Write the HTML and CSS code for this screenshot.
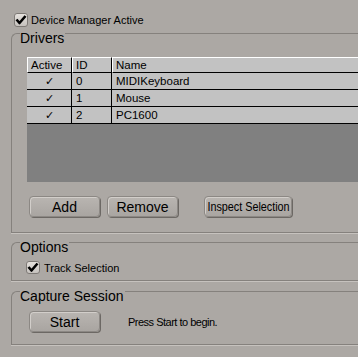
FILE: index.html
```html
<html>
<head>
    <link rel="stylesheet" href="styles.css">
</head>
<body>
<div class="toprow">
    <svg class="check" width="14" height="14" viewBox="0 0 14 14">
        <defs>
            <linearGradient id="cbfill" x1="0" y1="0" x2="0" y2="1">
                <stop offset="0" stop-color="#e6e2de"/>
                <stop offset="1" stop-color="#c4c0bc"/>
            </linearGradient>
        </defs>
        <rect x="0.5" y="0.5" width="13" height="13" rx="2.5" fill="url(#cbfill)" stroke="#7e7a76"/>
        <path d="M2.5 6.5 L5.5 10 L11.5 3" fill="none" stroke="#000" stroke-width="2.6" stroke-linejoin="round"/>
    </svg>
    <span>Device Manager Active</span>
</div>

<div class="group drivers">
    <div class="legend">Drivers</div>
    <div class="list">
        <table class="grid">
            <tr>
                <th class="c-active">Active</th>
                <th class="c-id">ID</th>
                <th class="c-name">Name</th>
            </tr>
            <tr>
                <td class="c-active tick">&#10003;</td>
                <td class="c-id">0</td>
                <td class="c-name">MIDIKeyboard</td>
            </tr>
            <tr>
                <td class="c-active tick">&#10003;</td>
                <td class="c-id">1</td>
                <td class="c-name">Mouse</td>
            </tr>
            <tr>
                <td class="c-active tick">&#10003;</td>
                <td class="c-id">2</td>
                <td class="c-name">PC1600</td>
            </tr>
        </table>
        <div class="empty"></div>
    </div>
    <div class="buttons">
        <button class="btn">Add</button>
        <button class="btn">Remove</button>
        <button class="btn wide"><span class="narrow">Inspect Selection</span></button>
    </div>
</div>

<div class="group options">
    <div class="legend">Options</div>
    <div class="optrow">
        <svg class="check" width="14" height="13" viewBox="0 0 14 13">
            <rect x="0.5" y="0.5" width="13" height="12" rx="2.5" fill="url(#cbfill)" stroke="#7e7a76"/>
            <path d="M2.5 6 L5.5 9.5 L11.5 2.5" fill="none" stroke="#000" stroke-width="2.6" stroke-linejoin="round"/>
        </svg>
        <span>Track Selection</span>
    </div>
</div>

<div class="group capture">
    <div class="legend">Capture Session</div>
    <div class="caprow">
        <button class="btn">Start</button>
        <span class="hint">Press Start to begin.</span>
    </div>
</div>
</body>
</html>
```

FILE: styles.css
```css
body {
    margin: 0;
    background: #aca8a4;
    font-family: "Liberation Sans", Arial, sans-serif;
    color: #000;
    overflow: hidden;
}

.toprow {
    display: flex;
    align-items: center;
    gap: 3px;
    height: 14px;
    padding: 13px 0 0 14px;
    font-size: 11px;
}

.check {
    display: block;
    flex: none;
}

/* etched group frame, open on the right */
.group {
    margin-left: 11px;
    border: 1px solid #85817d;
    border-right: none;
    border-top-left-radius: 6px;
    box-shadow: 0 1px 0 #c6c2be;
}

.drivers {
    margin-top: 6px;
}

.options {
    margin-top: 9px;
}

.capture {
    margin-top: 10px;
}

.legend {
    width: fit-content;
    margin: -3px 0 0 8px;
    padding-right: 1px;
    background: #aca8a4;
    font-size: 14px;
    line-height: 14px;
}

.list {
    margin: 12px 0 0 15px;
}

.grid {
    width: 100%;
    border-collapse: separate;
    border-spacing: 0;
    background: #c2c2c2;
    font-size: 11.5px;
}

.grid th,
.grid td {
    padding: 0 0 0 3px;
    text-align: left;
    font-weight: normal;
    border-bottom: 1px solid #000;
    border-right: 1px solid #000;
    white-space: nowrap;
}

.grid th {
    height: 16px;
    border-top: 1px solid #fff;
    border-left: 1px solid #fff;
}

.grid td {
    height: 17px;
    padding-left: 4px;
}

.grid td.c-active {
    padding-left: 1px;
}

.grid .c-active {
    width: 40px;
}

.grid .c-id {
    width: 35px;
}

.grid .c-name {
    border-right: none;
}

.grid .tick {
    text-align: center;
    font-family: "DejaVu Sans", sans-serif;
    font-size: 11px;
}

.empty {
    height: 58px;
    background: #808080;
}

.buttons {
    display: flex;
    margin: 14px 0 15px 17px;
}

.btn {
    display: inline-flex;
    align-items: center;
    justify-content: center;
    width: 71px;
    height: 21px;
    padding: 0;
    font-family: "Liberation Sans", Arial, sans-serif;
    font-size: 14px;
    font-weight: normal;
    color: #000;
    border: 1px solid #8c8884;
    border-radius: 4px;
    background: linear-gradient(#b9b5b1, #a9a5a1);
    box-shadow: inset 1px 1px 0 #d2ceca, 1px 1px 0 #6c6864;
}

.btn + .btn {
    margin-left: 7px;
}

.btn.wide {
    width: 88px;
    margin-left: 26px;
    font-size: 13px;
}

.narrow {
    flex: none;
    transform: scaleX(0.83);
    white-space: nowrap;
}

.optrow {
    display: flex;
    align-items: center;
    gap: 4px;
    height: 13px;
    margin: 7px 0 6px 14px;
    font-size: 11px;
}

.caprow {
    display: flex;
    align-items: center;
    margin: 8px 0 12px 17px;
}

.hint {
    margin-left: 28px;
    font-size: 11px;
    letter-spacing: -0.5px;
}
```
